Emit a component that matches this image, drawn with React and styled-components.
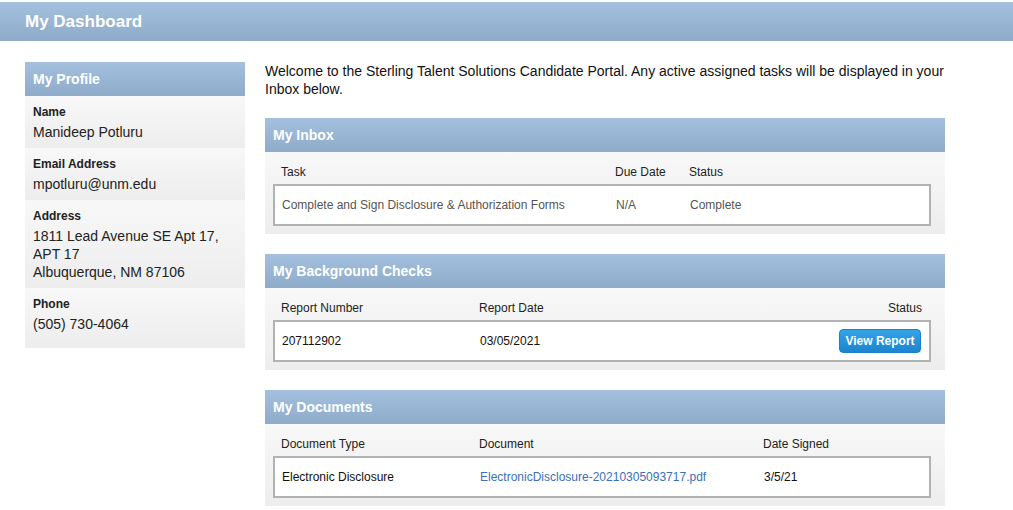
import React from "react";
import styled, { createGlobalStyle } from "styled-components";

const GlobalStyle = createGlobalStyle`
  body {
    margin: 0;
    background: #fff;
    font-family: "Liberation Sans", Arial, sans-serif;
    color: #222;
  }
`;

const profile = [
  { label: "Name", value: ["Manideep Potluru"] },
  { label: "Email Address", value: ["mpotluru@unm.edu"] },
  { label: "Address", value: ["1811 Lead Avenue SE Apt 17,", "APT 17", "Albuquerque, NM 87106"] },
  { label: "Phone", value: ["(505) 730-4064"] },
];

export default function App() {
  return (
    <>
      <GlobalStyle />
      <TopBar>My Dashboard</TopBar>
      <Content>
        <Sidebar>
          <BlueHeader>My Profile</BlueHeader>
          {profile.map((p, i) => (
            <ProfileItem key={p.label} last={i === profile.length - 1}>
              <Label>{p.label}</Label>
              <Value>
                {p.value.map((v) => (
                  <div key={v}>{v}</div>
                ))}
              </Value>
            </ProfileItem>
          ))}
        </Sidebar>

        <Main>
          <Welcome>
            Welcome to the Sterling Talent Solutions Candidate Portal. Any active assigned tasks will be
            displayed in your Inbox below.
          </Welcome>

          <Panel>
            <BlueHeader>My Inbox</BlueHeader>
            <PanelBody>
              <HeadRow cols="334px 74px 1fr">
                <span>Task</span>
                <span>Due Date</span>
                <span>Status</span>
              </HeadRow>
              <DataBox cols="334px 74px 1fr" muted>
                <span>Complete and Sign Disclosure &amp; Authorization Forms</span>
                <span>N/A</span>
                <span>Complete</span>
              </DataBox>
            </PanelBody>
          </Panel>

          <Panel>
            <BlueHeader>My Background Checks</BlueHeader>
            <PanelBody>
              <HeadRow cols="198px 1fr auto">
                <span>Report Number</span>
                <span>Report Date</span>
                <span>Status</span>
              </HeadRow>
              <DataBox cols="198px 1fr auto">
                <span>207112902</span>
                <span>03/05/2021</span>
                <ViewButton>View Report</ViewButton>
              </DataBox>
            </PanelBody>
          </Panel>

          <Panel>
            <BlueHeader>My Documents</BlueHeader>
            <PanelBody>
              <HeadRow cols="198px 284px 1fr">
                <span>Document Type</span>
                <span>Document</span>
                <span>Date Signed</span>
              </HeadRow>
              <DataBox cols="198px 284px 1fr">
                <span>Electronic Disclosure</span>
                <DocLink href="#">ElectronicDisclosure-20210305093717.pdf</DocLink>
                <span>3/5/21</span>
              </DataBox>
            </PanelBody>
          </Panel>
        </Main>
      </Content>
    </>
  );
}

const TopBar = styled.div`
  margin-top: 2px;
  height: 39px;
  display: flex;
  align-items: center;
  padding-left: 25px;
  background: linear-gradient(#a3c0de, #8eabca);
  color: #fff;
  font-size: 17px;
  font-weight: bold;
`;

const Content = styled.div`
  display: flex;
  align-items: flex-start;
  gap: 20px;
  padding: 21px 25px;
`;

const Sidebar = styled.div`
  width: 220px;
  flex-shrink: 0;
`;

const BlueHeader = styled.div`
  height: 34px;
  display: flex;
  align-items: center;
  padding-left: 8px;
  background: linear-gradient(#a3c0de, #8eabca);
  color: #fff;
  font-size: 14px;
  font-weight: bold;
`;

const ProfileItem = styled.div`
  padding: 9px 8px ${(p) => (p.last ? "15px" : "7px")};
  background: linear-gradient(#f8f8f8, #ededed);
`;

const Label = styled.div`
  font-size: 12px;
  font-weight: bold;
  line-height: 14px;
  color: #222;
  margin-bottom: 4px;
`;

const Value = styled.div`
  font-size: 14px;
  line-height: 18px;
  color: #222;
`;

const Main = styled.div`
  width: 680px;
  display: flex;
  flex-direction: column;
  gap: 20px;
`;

const Welcome = styled.p`
  margin: 0;
  font-size: 14px;
  line-height: 18px;
  color: #111;
`;

const Panel = styled.div``;

const PanelBody = styled.div`
  padding: 0 14px 8px 8px;
  background: linear-gradient(#f8f8f8, #ededed);
`;

const HeadRow = styled.div`
  display: grid;
  grid-template-columns: ${(p) => p.cols};
  padding: 13px 9px 5px 8px;
  font-size: 12px;
  line-height: 14px;
  color: #222;
`;

const DataBox = styled.div`
  display: grid;
  grid-template-columns: ${(p) => p.cols};
  align-items: center;
  height: 42px;
  box-sizing: border-box;
  padding: 0 8px 0 7px;
  background: #fff;
  border: 2px solid #b2b2b2;
  font-size: 12px;
  color: ${(p) => (p.muted ? "#555" : "#111")};
`;

const ViewButton = styled.button`
  height: 24px;
  width: 82px;
  padding: 0;
  border: 1px solid #1a80c8;
  border-radius: 4px;
  background: linear-gradient(#33a3e6, #1b85cf);
  color: #fff;
  font-family: "Liberation Sans", Arial, sans-serif;
  font-size: 12px;
  font-weight: bold;
`;

const DocLink = styled.a`
  color: #3a70b8;
  text-decoration: none;
`;
